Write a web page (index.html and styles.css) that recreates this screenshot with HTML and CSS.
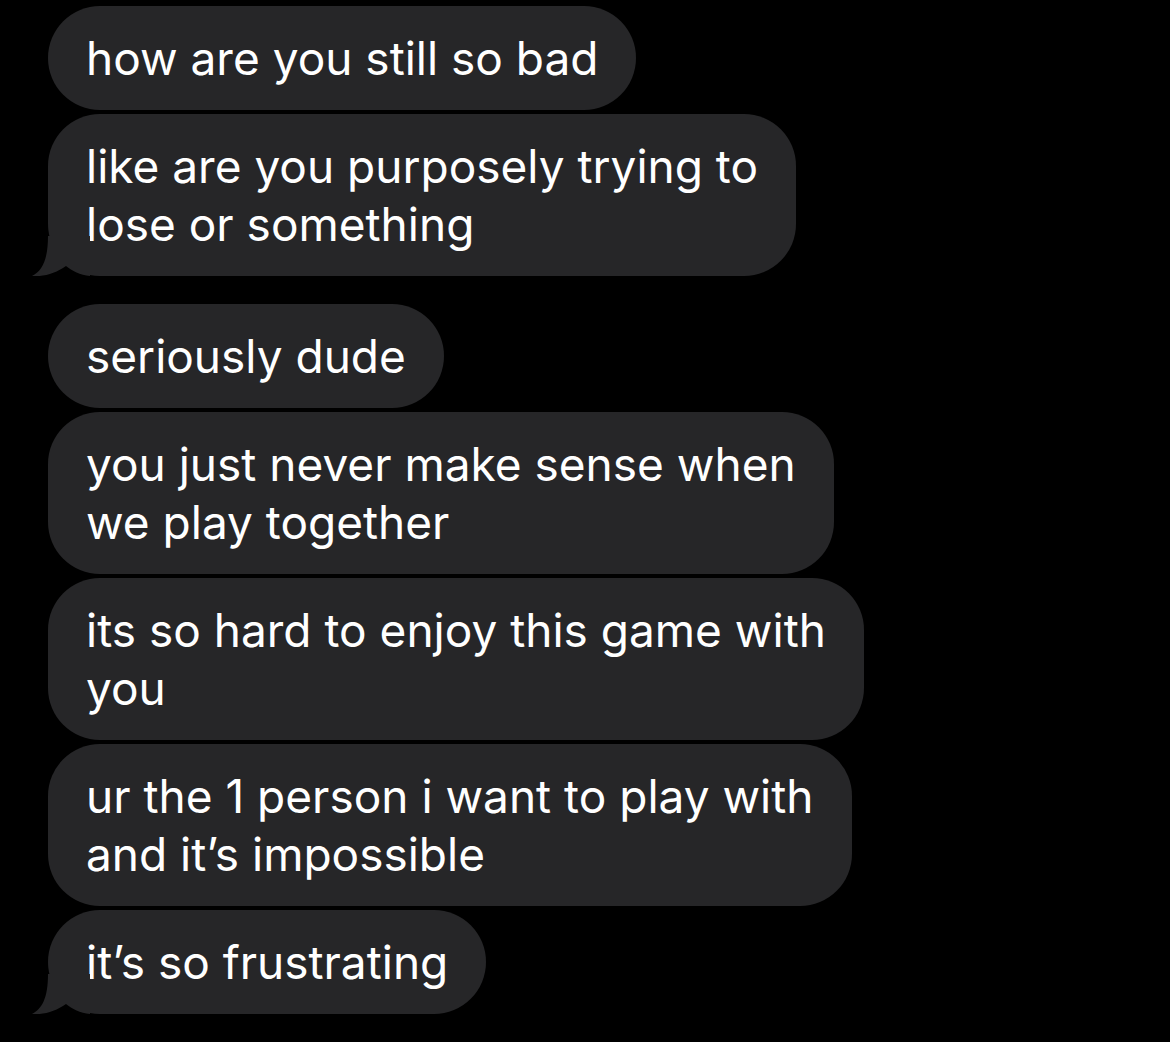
FILE: index.html
```html
<!DOCTYPE html>
<html lang="en">
<head>
    <meta charset="UTF-8">
    <meta name="viewport" content="width=device-width, initial-scale=1.0">
    <title>Messages</title>
    <link rel="stylesheet" href="styles.css">
</head>
<body>
    <div class="thread">
        <div class="group">
            <div class="bubble">how are you still so bad</div>
            <div class="bubble tail">
                like are you purposely trying to<br>lose or something
                <svg class="tail-shape" viewBox="0 0 60 40" width="60" height="40"><path d="M16 0 C16 24 10 35 0 40 C12 41 24 37 34 30 C40 35 48 39 58 40 L58 0 Z"/></svg>
            </div>
        </div>
        <div class="group">
            <div class="bubble">seriously dude</div>
            <div class="bubble">you just never make sense when<br>we play together</div>
            <div class="bubble">its so hard to enjoy this game with<br>you</div>
            <div class="bubble">ur the 1 person i want to play with<br>and it&#8217;s impossible</div>
            <div class="bubble tail">
                it&#8217;s so frustrating
                <svg class="tail-shape" viewBox="0 0 60 40" width="60" height="40"><path d="M16 0 C16 24 10 35 0 40 C12 41 24 37 34 30 C40 35 48 39 58 40 L58 0 Z"/></svg>
            </div>
        </div>
    </div>
</body>
</html>
```

FILE: styles.css
```css
body {
    margin: 0;
    padding: 0;
    background-color: #000;
    font-family: Inter, "Noto Sans", sans-serif;
}
.thread {
    padding: 6px 0 0 48px;
    display: flex;
    flex-direction: column;
    gap: 28px;
}
.group {
    display: flex;
    flex-direction: column;
    align-items: flex-start;
    gap: 4px;
}
.bubble {
    position: relative;
    background-color: #262628;
    color: #fff;
    font-size: 46px;
    line-height: 58px;
    padding: 23px 38px;
    border-radius: 52px;
    white-space: nowrap;
}
.tail-shape {
    position: absolute;
    left: -16px;
    bottom: 0;
    fill: #262628;
}
```
